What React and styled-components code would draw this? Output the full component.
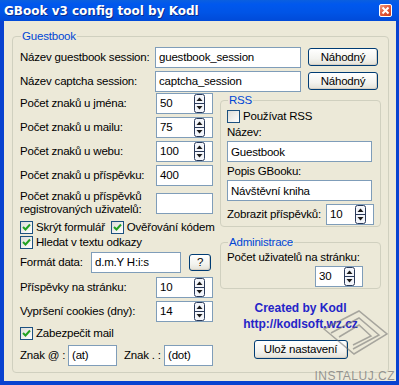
import React from 'react'
import styled, { createGlobalStyle } from 'styled-components'

const GlobalStyle = createGlobalStyle`
  html, body { margin: 0; padding: 0; background: #fff; }
  * { box-sizing: border-box; }
`

const Window = styled.div`
  position: relative;
  width: 399px;
  height: 385px;
  display: flex;
  flex-direction: column;
  background: #0842d0;
  padding: 0 3px 4px 4px;
  font-family: "Liberation Sans", Arial, sans-serif;
  font-size: 11.5px;
  letter-spacing: -0.2px;
  color: #000;
  overflow: hidden;
`

const TitleBar = styled.div`
  height: 21px;
  margin: 0 -3px 0 -4px;
  padding: 0 4px 0 4px;
  display: flex;
  align-items: center;
  justify-content: space-between;
  background: linear-gradient(to bottom, #0a5fe0 0%, #0058ee 20%, #0054e6 60%, #004ad8 100%);
`

const Title = styled.span`
  color: #fff;
  font-family: "DejaVu Sans", sans-serif;
  font-weight: bold;
  font-size: 12px;
  letter-spacing: 0;
  text-shadow: 1px 1px 0 #0a2b8a;
`

const CloseBtn = styled.div`
  width: 13px;
  height: 13px;
  margin-right: 3px;
  border: 1px solid #fff;
  border-radius: 2px;
  background: linear-gradient(135deg, #f09a7e 0%, #e2593a 50%, #c83c1c 100%);
  display: flex;
  align-items: center;
  justify-content: center;
`

const Body = styled.div`
  flex: 1;
  background: #ece9d8;
  padding: 8px 7px 8px 8px;
`

const Group = styled.fieldset`
  margin: 0;
  padding: ${p => p.$pad || '2px 7px 8px 7px'};
  border: 1px solid #d0d0bf;
  border-radius: 4px;
  height: ${p => p.$h || 'auto'};
`

const Legend = styled.legend`
  color: #0046d5;
  padding: 0 1px;
  margin-left: 1px;
  line-height: 14px;
`

const Row = styled.div`
  display: flex;
  align-items: center;
  height: ${p => p.$h || 24}px;
  padding-right: ${p => p.$pr || 0}px;
  justify-content: ${p => (p.$center ? 'center' : 'flex-start')};
`

const Label = styled.span`
  flex: ${p => (p.$fixed ? 'none' : 1)};
  min-width: 0;
  width: ${p => p.$w ? p.$w + 'px' : 'auto'};
  margin-left: ${p => p.$ml || 0}px;
  line-height: 13px;
  white-space: nowrap;
`

const Box = styled.div`
  position: relative;
  flex: none;
  width: ${p => p.$w}px;
  height: ${p => p.$h || 21}px;
  margin-left: ${p => p.$ml || 0}px;
  background: #fff;
  border: 1px solid #7f9db9;
  padding: 0 3px;
  display: flex;
  align-items: center;
  line-height: 14px;
  white-space: nowrap;
`

const Button = styled.div`
  flex: none;
  width: ${p => p.$w}px;
  height: ${p => p.$h || 18}px;
  margin-left: ${p => p.$ml || 0}px;
  border: 1px solid #003c74;
  border-radius: 3px;
  background: linear-gradient(to bottom, #ffffff 0%, #f3f3ef 60%, #e3e1d7 100%);
  box-shadow: inset -1px -1px 0 #d6d0c5;
  display: flex;
  align-items: center;
  justify-content: center;
`

const Main = styled.div`
  display: flex;
  gap: 7px;
  margin-top: -2px;
`

const LeftCol = styled.div`
  width: 193px;
  display: flex;
  flex-direction: column;
`

const RightCol = styled.div`
  width: 161px;
  display: flex;
  flex-direction: column;
  margin-top: 2px;
`

const Check = styled.span`
  flex: none;
  width: 13px;
  height: 13px;
  margin-right: 3px;
  border: 1px solid #1c5180;
  background: linear-gradient(135deg, #dcdcd7 0%, #ffffff 100%);
  display: flex;
  align-items: center;
  justify-content: center;
`

const CheckRow = styled.div`
  display: flex;
  align-items: center;
  height: ${p => p.$h || 14}px;
  white-space: nowrap;
`

const CheckItem = styled.span`
  display: inline-flex;
  align-items: center;
  margin-right: ${p => p.$mr || 0}px;
`

const Spin = styled.svg`
  position: absolute;
  right: 7px;
  top: 0px;
`

const Stacked = styled.div`
  display: flex;
  flex-direction: column;
  padding-top: 2px;
`

const Credits = styled.div`
  margin-top: 11px;
  text-align: center;
  color: #2424c8;
  font-weight: bold;
  font-size: 12px;
  letter-spacing: 0;
  line-height: 16px;
`

const Watermark = styled.div`
  position: absolute;
  right: 4px;
  bottom: 2px;
  color: rgba(120, 120, 120, 0.75);
  font-size: 12px;
  letter-spacing: 0.5px;
`

const WatermarkLogo = styled.svg`
  position: absolute;
  right: 10px;
  bottom: 16px;
`

function Checkbox({ checked, children, mr }) {
  return (
    <CheckItem $mr={mr}>
      <Check>
        {checked && (
          <svg width="9" height="9" viewBox="0 0 9 9">
            <path d="M1 4 L3.5 6.5 L8 1.5" stroke="#21a121" strokeWidth="2" fill="none" />
          </svg>
        )}
      </Check>
      {children}
    </CheckItem>
  )
}

function SpinBox({ value, w = 57, ml }) {
  return (
    <Box $w={w} $ml={ml}>
      {value}
      <Spin width="11" height="19" viewBox="0 0 11 19">
        <rect x="0.5" y="0.5" width="10" height="18" rx="2" fill="#f4f6fb" stroke="#2a3a5a" />
        <line x1="1" y1="9.5" x2="10" y2="9.5" stroke="#2a3a5a" />
        <path d="M2.5 7 L5.5 3.5 L8.5 7 Z" fill="#1a1a1a" />
        <path d="M2.5 12 L5.5 15.5 L8.5 12 Z" fill="#1a1a1a" />
      </Spin>
    </Box>
  )
}

export default function App() {
  return (
    <>
      <GlobalStyle />
      <Window>
        <TitleBar>
          <Title>GBook v3 config tool by Kodl</Title>
          <CloseBtn>
            <svg width="9" height="9" viewBox="0 0 9 9">
              <path d="M1.5 1.5 L7.5 7.5 M7.5 1.5 L1.5 7.5" stroke="#fff" strokeWidth="2" />
            </svg>
          </CloseBtn>
        </TitleBar>
        <Body>
          <Group $h="344px">
            <Legend>Guestbook</Legend>
            <Row $pr={3}>
              <Label>Název guestbook session:</Label>
              <Box $w={146}>guestbook_session</Box>
              <Button $w={70} $ml={7}>Náhodný</Button>
            </Row>
            <Row $pr={3}>
              <Label>Název captcha session:</Label>
              <Box $w={146}>captcha_session</Box>
              <Button $w={70} $ml={7}>Náhodný</Button>
            </Row>
            <Main>
              <LeftCol>
                <Row><Label>Počet znaků u jména:</Label><SpinBox value="50" /></Row>
                <Row><Label>Počet znaků u mailu:</Label><SpinBox value="75" /></Row>
                <Row><Label>Počet znaků u webu:</Label><SpinBox value="100" /></Row>
                <Row><Label>Počet znaků u příspěvku:</Label><Box $w={57}>400</Box></Row>
                <Row $h={32}>
                  <Label>Počet znaků u příspěvků<br />registrovaných uživatelů:</Label>
                  <Box $w={57} />
                </Row>
                <CheckRow $h={16}>
                  <Checkbox checked mr={6}>Skrýt formulář</Checkbox>
                  <Checkbox checked>Ověřování kódem</Checkbox>
                </CheckRow>
                <CheckRow $h={14}>
                  <Checkbox checked>Hledat v textu odkazy</Checkbox>
                </CheckRow>
                <Row $h={26}>
                  <Label $fixed $w={71}>Formát data:</Label>
                  <Box $w={90}>d.m.Y H:i:s</Box>
                  <Button $w={22} $h={17} $ml={8}>?</Button>
                </Row>
                <Row><Label>Příspěvky na stránku:</Label><SpinBox value="10" /></Row>
                <Row><Label>Vypršení cookies (dny):</Label><SpinBox value="14" /></Row>
                <CheckRow $h={20}>
                  <Checkbox checked>Zabezpečit mail</Checkbox>
                </CheckRow>
                <Row $h={24}>
                  <Label $fixed $w={48}>Znak @ :</Label>
                  <Box $w={49}>(at)</Box>
                  <Label $fixed $w={40} $ml={7}>Znak . :</Label>
                  <Box $w={49}>(dot)</Box>
                </Row>
              </LeftCol>
              <RightCol>
                <Group $pad="0 6px 4px 6px" $h="134px">
                  <Legend>RSS</Legend>
                  <Stacked>
                    <CheckRow $h={14}><Checkbox>Používat RSS</Checkbox></CheckRow>
                    <Row $h={18}><Label>Název:</Label></Row>
                    <Box $w={145} $h={21}>Guestbook</Box>
                    <Row $h={18}><Label>Popis GBooku:</Label></Row>
                    <Box $w={145} $h={21}>Návštěvní kniha</Box>
                    <Row $h={26}>
                      <Label>Zobrazit příspěvků:</Label>
                      <SpinBox value="10" w={48} />
                    </Row>
                  </Stacked>
                </Group>
                <Group $pad="0 6px 4px 6px" $h="54px" style={{ marginTop: 8 }}>
                  <Legend>Administrace</Legend>
                  <Row $h={16}><Label>Počet uživatelů na stránku:</Label></Row>
                  <Row $h={22} $pr={11}>
                    <Label />
                    <SpinBox value="30" w={48} />
                  </Row>
                </Group>
                <Credits>
                  Created by Kodl<br />http://kodlsoft.wz.cz
                </Credits>
                <Row $h={34} $center>
                  <Button $w={94} $h={19}>Ulož nastavení</Button>
                </Row>
              </RightCol>
            </Main>
          </Group>
        </Body>
        <WatermarkLogo width="70" height="60" viewBox="0 0 70 60">
          <g stroke="rgba(110,110,110,0.55)" fill="none" strokeWidth="1.5">
            <path d="M5 20 L40 2 L68 25 L35 45 Z" />
            <path d="M12 24 L40 9 L60 26 L34 40" />
            <path d="M20 28 L40 16 L52 27 L34 36" />
          </g>
        </WatermarkLogo>
        <Watermark>INSTALUJ.CZ</Watermark>
      </Window>
    </>
  )
}
